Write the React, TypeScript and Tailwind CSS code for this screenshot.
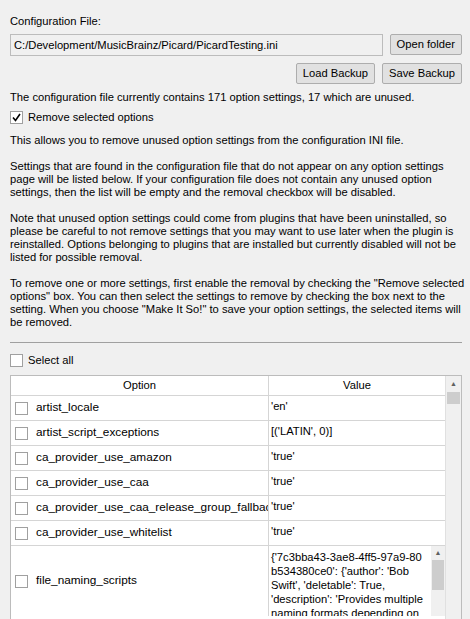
const rows: [string, string][] = [
  ["artist_locale", "'en'"],
  ["artist_script_exceptions", "[('LATIN', 0)]"],
  ["ca_provider_use_amazon", "'true'"],
  ["ca_provider_use_caa", "'true'"],
  ["ca_provider_use_caa_release_group_fallback", "'true'"],
  ["ca_provider_use_whitelist", "'true'"],
];

function Box({ checked }: { checked?: boolean }) {
  return (
    <span className="flex h-[13px] w-[13px] shrink-0 items-center justify-center border border-[#a0a0a0] bg-white">
      {checked && (
        <svg width="9" height="9" viewBox="0 0 9 9">
          <path d="M1 4.5 L3.5 7.5 L8 1" fill="none" stroke="#000" strokeWidth="1.6" />
        </svg>
      )}
    </span>
  );
}

function Btn({ children }: { children: string }) {
  return (
    <button className="h-[21px] rounded-[2px] border border-[#adadad] bg-[#e1e1e1] px-[6px] leading-none">
      {children}
    </button>
  );
}

function Lines({ lines }: { lines: string[] }) {
  return (
    <div className="whitespace-nowrap">
      {lines.map((l) => (
        <div key={l} className="h-[13px] leading-[13px]">{l}</div>
      ))}
    </div>
  );
}

export default function App() {
  return (
    <div
      className="h-[619px] w-[470px] overflow-hidden bg-[#f0f0f0] pl-[10px] pr-[8px] text-[11.2px] text-black"
      style={{ fontFamily: '"Liberation Sans", Arial, sans-serif' }}
    >
      <div className="pt-[14px] leading-[14px]">Configuration File:</div>
      <div className="mt-[6px] flex gap-[7px]">
        <div className="flex h-[22px] flex-1 items-center border border-[#bcbcbc] bg-[#f0f0f0] px-[3px]">
          C:/Development/MusicBrainz/Picard/PicardTesting.ini
        </div>
        <Btn>Open folder</Btn>
      </div>
      <div className="mt-[7px] flex justify-end gap-[7px]">
        <Btn>Load Backup</Btn>
        <Btn>Save Backup</Btn>
      </div>
      <div className="mt-[6px] leading-[14px]">
        The configuration file currently contains 171 option settings, 17 which are unused.
      </div>
      <div className="mt-[6px] flex items-center gap-[5px] leading-[14px]">
        <Box checked />
        Remove selected options
      </div>
      <div className="mt-[10px] flex flex-col gap-[13px]">
        <Lines lines={["This allows you to remove unused option settings from the configuration INI file."]} />
        <Lines
          lines={[
            "Settings that are found in the configuration file that do not appear on any option settings",
            "page will be listed below. If your configuration file does not contain any unused option",
            "settings, then the list will be empty and the removal checkbox will be disabled.",
          ]}
        />
        <Lines
          lines={[
            "Note that unused option settings could come from plugins that have been uninstalled, so",
            "please be careful to not remove settings that you may want to use later when the plugin is",
            "reinstalled. Options belonging to plugins that are installed but currently disabled will not be",
            "listed for possible removal.",
          ]}
        />
        <Lines
          lines={[
            'To remove one or more settings, first enable the removal by checking the "Remove selected',
            'options" box. You can then select the settings to remove by checking the box next to the',
            'setting. When you choose "Make It So!" to save your option settings, the selected items will',
            "be removed.",
          ]}
        />
      </div>
      <div className="mt-[13px] h-px bg-[#a0a0a0]" />
      <div className="mt-[10px] flex items-center gap-[5px] leading-[14px]">
        <Box />
        Select all
      </div>
      <div className="mt-[8px] flex h-[260px] border border-[#bcbcbc] bg-white">
        <div className="flex-1">
          <div className="flex h-[20px] border-b border-[#d5d5d5] bg-white">
            <div className="flex w-[258px] items-center justify-center border-r border-[#d5d5d5]">Option</div>
            <div className="flex flex-1 items-center justify-center">Value</div>
          </div>
          {rows.map(([o, v]) => (
            <div key={o} className="flex h-[25px] border-b border-[#d5d5d5]">
              <div className="flex w-[258px] items-center gap-[8px] overflow-hidden whitespace-nowrap border-r border-[#d5d5d5] pl-[4px] text-[11.8px]">
                <Box />
                {o}
              </div>
              <div className="flex-1 pl-[2px] pt-[2px]">{v}</div>
            </div>
          ))}
          <div className="flex h-[70px]">
            <div className="flex w-[258px] items-center gap-[8px] border-r border-[#d5d5d5] pl-[4px] text-[11.8px]">
              <Box />
              file_naming_scripts
            </div>
            <div className="flex flex-1 overflow-hidden">
              <div className="flex-1 overflow-hidden pl-[2px] pt-[4px] leading-[14px]">
                <div>{"{'7c3bba43-3ae8-4ff5-97a9-80"}</div>
                <div>{"b534380ce0': {'author': 'Bob"}</div>
                <div>{"Swift', 'deletable': True,"}</div>
                <div>{"'description': 'Provides multiple"}</div>
                <div>naming formats depending on</div>
              </div>
              <div className="flex w-[14px] flex-col bg-[#f0f0f0]">
                <div className="flex h-[14px] items-center justify-center text-[7px] text-[#606060]">▲</div>
                <div className="mx-[1px] h-[30px] bg-[#cdcdcd]" />
              </div>
            </div>
          </div>
        </div>
        <div className="flex w-[16px] flex-col justify-between border-l border-[#e0e0e0] bg-[#f0f0f0]">
          <div>
            <div className="flex h-[16px] items-center justify-center text-[7px] text-[#606060]">▲</div>
            <div className="mx-[1px] h-[12px] bg-[#cdcdcd]" />
          </div>
          <div className="flex h-[16px] items-center justify-center text-[7px] text-[#606060]">▼</div>
        </div>
      </div>
    </div>
  );
}
